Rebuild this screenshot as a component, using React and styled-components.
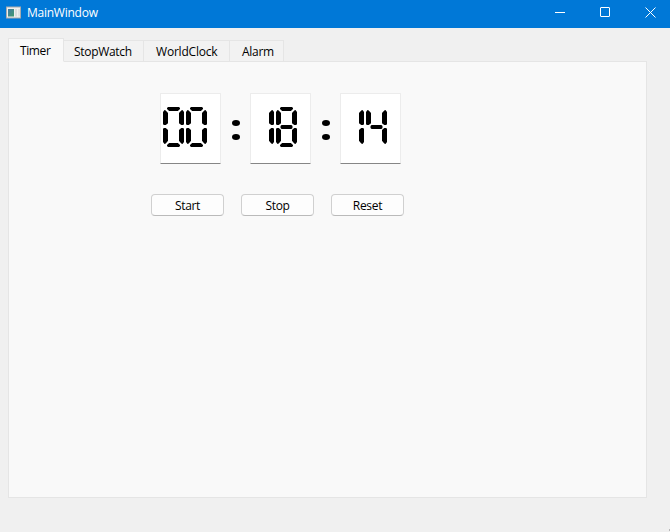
import React from 'react';
import styled, { createGlobalStyle } from 'styled-components';

const GlobalStyle = createGlobalStyle`
  * { box-sizing: border-box; }
  body { margin: 0; background: #f0f0f0; }
`;

const Window = styled.div`
  width: 670px;
  height: 532px;
  display: flex;
  flex-direction: column;
  background: #f0f0f0;
  color: #000;
  font: 12px/16px "Open Sans", "Noto Sans", sans-serif;
  overflow: hidden;
`;

const TitleBar = styled.header`
  height: 28px;
  flex: none;
  display: flex;
  align-items: center;
  padding: 0 0 3px 6px;
  background: #0078d7;
  color: #fff;
`;

const Label = styled.span`
  display: inline-block;
  white-space: nowrap;
  letter-spacing: ${(p) => p.$spacing || 0}px;
`;

const Title = styled(Label)`
  flex: 1;
  margin-left: 6px;
  padding-top: 1px;
`;

const Controls = styled.div`
  display: flex;
  gap: 35px;
  padding-right: 14px;
  svg { display: block; }
`;

const Body = styled.main`
  flex: 1;
  display: flex;
  flex-direction: column;
  padding: 10px 23px 34px 8px;
`;

const Tabs = styled.nav`
  display: flex;
  align-items: flex-end;
  height: 24px;
  margin-bottom: -1px;
  z-index: 1;
`;

const Tab = styled.div`
  width: ${(p) => p.$width}px;
  height: ${(p) => (p.$active ? 24 : 22)}px;
  padding: ${(p) => (p.$active ? 4 : 3)}px 0 0 ${(p) => p.$indent}px;
  border: 1px solid #e5e5e5;
  border-left-width: ${(p) => (p.$active ? 1 : 0)}px;
  border-bottom-color: ${(p) => (p.$active ? '#f9f9f9' : '#e5e5e5')};
  background: ${(p) => (p.$active ? '#f9f9f9' : '#f2f2f2')};
`;

const Pane = styled.section`
  flex: 1;
  border: 1px solid #e5e5e5;
  background: #f9f9f9;
  padding: 31px 0 0 142px;
`;

const Clock = styled.div`
  display: flex;
  padding-left: 9px;
`;

const Display = styled.div`
  display: flex;
  gap: 2px;
  width: 61px;
  height: 71px;
  padding: 13px 0 0 2px;
  border: 1px solid #ececec;
  border-bottom-color: #868686;
  border-radius: 1px;
  background: #fff;
`;

const Digit = styled.div`
  display: grid;
  width: 21px;
  height: 40px;
  grid-template-columns: 4px 1px 11px 1px 4px;
  grid-template-rows: 3px 1px 14px 1px 2px 1px 14px 1px 3px;
`;

const places = {
  a: '1 / 2 / 3 / 5',
  b: '2 / 4 / 4 / 6',
  c: '6 / 4 / 9 / 6',
  d: '8 / 2 / 10 / 5',
  e: '6 / 1 / 9 / 3',
  f: '2 / 1 / 4 / 3',
  g: '4 / 2 / 7 / 5',
};

const shapes = {
  a: 'polygon(8% 0, 92% 0, 100% 25%, 100% 50%, 84% 100%, 16% 100%, 0 50%, 0 25%)',
  b: 'polygon(0 20%, 45% 3%, 70% 0, 100% 13%, 100% 93%, 85% 100%, 45% 100%, 0 88%)',
  c: 'polygon(0 12%, 45% 0, 85% 0, 100% 7%, 100% 87%, 70% 100%, 45% 97%, 0 80%)',
  d: 'polygon(16% 0, 84% 0, 100% 50%, 100% 75%, 92% 100%, 8% 100%, 0 75%, 0 50%)',
  e: 'polygon(15% 0, 55% 0, 100% 12%, 100% 80%, 55% 97%, 30% 100%, 0 87%, 0 7%)',
  f: 'polygon(30% 0, 55% 3%, 100% 20%, 100% 88%, 55% 100%, 15% 100%, 0 93%, 0 13%)',
  g: 'polygon(4% 25%, 12% 0, 88% 0, 96% 25%, 96% 75%, 88% 100%, 12% 100%, 4% 75%)',
};

const Segment = styled.i`
  grid-area: ${(p) => places[p.$at]};
  clip-path: ${(p) => shapes[p.$at]};
  background: #000;
`;

const Colon = styled.div`
  width: 29px;
  display: flex;
  flex-direction: column;
  align-items: center;
  gap: 8px;
  padding-top: 27px;
`;

const Dot = styled.i`
  width: 8px;
  height: 6px;
  border-radius: 50%;
  background: #000;
`;

const Actions = styled.div`
  display: flex;
  gap: 17px;
  margin-top: 30px;
`;

const Button = styled.button`
  width: 73px;
  height: 22px;
  padding: 1px 0 0;
  border: 1px solid #d0d0d0;
  border-bottom-color: #bababa;
  border-radius: 4px;
  background: #fdfdfd;
  color: #000;
  font: inherit;
`;

const Grip = styled.i`
  align-self: flex-end;
  width: 1px;
  height: 2px;
  margin: -3px 0 1px;
  background: #b8b8b8;
`;

const lit = { 0: 'abcdef', 1: 'bc', 4: 'bcfg', 8: 'abcdefg' };

const tabs = [
  { name: 'Timer', width: 56, indent: 11, spacing: -0.4 },
  { name: 'StopWatch', width: 80, indent: 10, spacing: -0.3 },
  { name: 'WorldClock', width: 86, indent: 12, spacing: -0.2 },
  { name: 'Alarm', width: 54, indent: 12, spacing: -0.3 },
];

function Number({ value }) {
  return (
    <Display role="img" aria-label={value}>
      {value.split('').map((n, i) => (
        <Digit key={i}>
          {lit[n].split('').map((s) => <Segment key={s} $at={s} />)}
        </Digit>
      ))}
    </Display>
  );
}

function AppIcon() {
  return (
    <svg width="15" height="13" viewBox="0 0 15 13">
      <defs>
        <linearGradient id="screen" x1="0" y1="0" x2="1" y2="1">
          <stop stopColor="#427aa6" />
          <stop offset="1" stopColor="#449b6d" />
        </linearGradient>
      </defs>
      <rect y=".5" width="15" height="12" fill="#a9abad" />
      <rect x="1" y="1.5" width="13" height="10" fill="#f0f0ee" />
      <rect x="2" y="3" width="6" height="7.5" fill="url(#screen)" />
      <rect x="9" y="3" width="2" height="7.5" fill="#dadddd" />
      <rect x="12" y="3" width="2" height="7.5" fill="#e0e2e2" />
    </svg>
  );
}

export default function App() {
  return (
    <>
      <GlobalStyle />
      <Window>
        <TitleBar>
          <AppIcon />
          <Title $spacing={-0.25}>MainWindow</Title>
          <Controls>
            <svg width="10" height="10" viewBox="0 0 10 10"><path d="M0 5.5h10" stroke="#fff" /></svg>
            <svg width="10" height="10" viewBox="0 0 10 10"><rect x=".5" y=".5" width="9" height="9" rx=".5" fill="none" stroke="#fff" /></svg>
            <svg width="11" height="11" viewBox="0 0 11 11"><path d="M.5.5l10 10M10.5.5l-10 10" stroke="#fff" /></svg>
          </Controls>
        </TitleBar>
        <Body>
          <Tabs>
            {tabs.map((t, i) => (
              <Tab key={t.name} $active={i === 0} $width={t.width} $indent={t.indent}>
                <Label $spacing={t.spacing}>{t.name}</Label>
              </Tab>
            ))}
          </Tabs>
          <Pane>
            <Clock>
              <Number value="00" />
              <Colon><Dot /><Dot /></Colon>
              <Number value="18" />
              <Colon><Dot /><Dot /></Colon>
              <Number value="14" />
            </Clock>
            <Actions>
              {['Start', 'Stop', 'Reset'].map((name) => (
                <Button key={name}><Label $spacing={-0.3}>{name}</Label></Button>
              ))}
            </Actions>
          </Pane>
        </Body>
        <Grip />
      </Window>
    </>
  );
}
